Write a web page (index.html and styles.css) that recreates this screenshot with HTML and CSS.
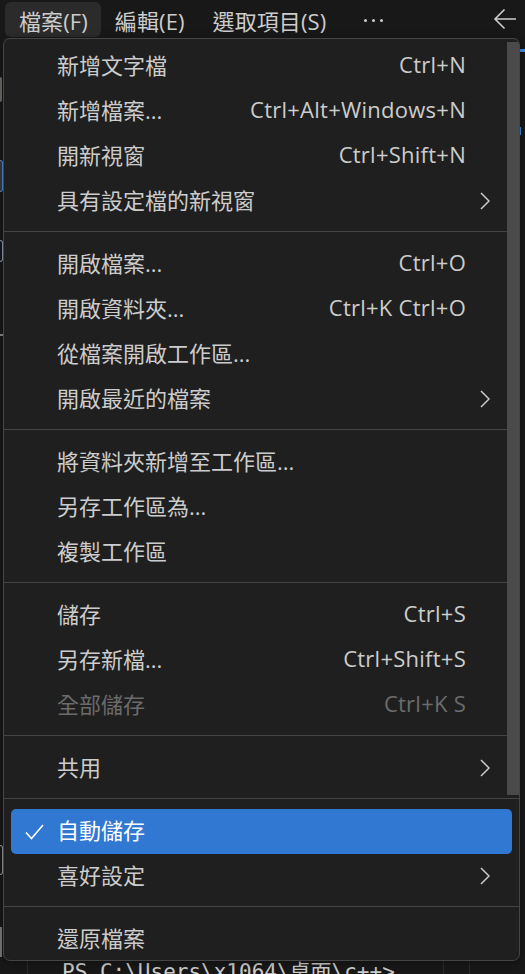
FILE: index.html
```html
<!DOCTYPE html>
<html lang="zh-Hant">
<head>
<meta charset="utf-8">
<title>檔案選單</title>
<link rel="stylesheet" href="styles.css">
</head>
<body>
<div class="app">
  <header class="menubar">
    <div class="mb-item active">檔案(F)</div>
    <div class="mb-item">編輯(E)</div>
    <div class="mb-item">選取項目(S)</div>
    <div class="mb-item more"><span class="dot"></span><span class="dot"></span><span class="dot"></span></div>
    <div class="mb-spacer"></div>
    <div class="back">
      <svg width="24" height="22" viewBox="0 0 24 22"><path d="M23 11H2M11.5 1.5L2 11l9.5 9.5" fill="none" stroke="#cccccc" stroke-width="1.6"/></svg>
    </div>
  </header>
  <main class="workbench">
    <div class="editor">
      <div class="edge">
        <div class="mark m1"></div>
        <div class="mark m2"></div>
        <div class="mark m3"></div>
        <div class="mark m4"></div>
        <div class="mark m5"></div>
        <div class="mark m6"></div>
      </div>
      <div class="editor-body"></div>
      <div class="edge-right">
        <div class="blue-line"></div>
        <div class="blue-plus"></div>
      </div>
    </div>
    <div class="terminal">
      <div class="term-gutter"></div>
      <div class="term-text">PS C:\Users\x1064\桌面\c++&gt;</div>
      <div class="term-col"></div>
      <div class="term-col2"></div>
    </div>
  </main>

  <nav class="menu">
    <div class="scrollbar"></div>

    <div class="item"><span class="check"></span><span class="label">新增文字檔</span><span class="key">Ctrl+N</span><span class="sub"></span></div>
    <div class="item"><span class="check"></span><span class="label">新增檔案...</span><span class="key">Ctrl+Alt+Windows+N</span><span class="sub"></span></div>
    <div class="item"><span class="check"></span><span class="label">開新視窗</span><span class="key">Ctrl+Shift+N</span><span class="sub"></span></div>
    <div class="item"><span class="check"></span><span class="label">具有設定檔的新視窗</span><span class="key"></span><span class="sub"><svg class="chev" width="10" height="18" viewBox="0 0 10 18"><path d="M1 1l8 8-8 8" fill="none" stroke="currentColor" stroke-width="1.5"/></svg></span></div>
    <div class="sep"></div>

    <div class="item"><span class="check"></span><span class="label">開啟檔案...</span><span class="key">Ctrl+O</span><span class="sub"></span></div>
    <div class="item"><span class="check"></span><span class="label">開啟資料夾...</span><span class="key">Ctrl+K Ctrl+O</span><span class="sub"></span></div>
    <div class="item"><span class="check"></span><span class="label">從檔案開啟工作區...</span><span class="key"></span><span class="sub"></span></div>
    <div class="item"><span class="check"></span><span class="label">開啟最近的檔案</span><span class="key"></span><span class="sub"><svg class="chev" width="10" height="18" viewBox="0 0 10 18"><path d="M1 1l8 8-8 8" fill="none" stroke="currentColor" stroke-width="1.5"/></svg></span></div>
    <div class="sep"></div>

    <div class="item"><span class="check"></span><span class="label">將資料夾新增至工作區...</span><span class="key"></span><span class="sub"></span></div>
    <div class="item"><span class="check"></span><span class="label">另存工作區為...</span><span class="key"></span><span class="sub"></span></div>
    <div class="item"><span class="check"></span><span class="label">複製工作區</span><span class="key"></span><span class="sub"></span></div>
    <div class="sep"></div>

    <div class="item"><span class="check"></span><span class="label">儲存</span><span class="key">Ctrl+S</span><span class="sub"></span></div>
    <div class="item"><span class="check"></span><span class="label">另存新檔...</span><span class="key">Ctrl+Shift+S</span><span class="sub"></span></div>
    <div class="item disabled"><span class="check"></span><span class="label">全部儲存</span><span class="key">Ctrl+K S</span><span class="sub"></span></div>
    <div class="sep"></div>

    <div class="item"><span class="check"></span><span class="label">共用</span><span class="key"></span><span class="sub"><svg class="chev" width="10" height="18" viewBox="0 0 10 18"><path d="M1 1l8 8-8 8" fill="none" stroke="currentColor" stroke-width="1.5"/></svg></span></div>
    <div class="sep"></div>

    <div class="item selected"><span class="check"><svg width="19" height="16" viewBox="0 0 19 16"><path d="M1 8.5l5.5 6L18 1" fill="none" stroke="currentColor" stroke-width="1.6"/></svg></span><span class="label">自動儲存</span><span class="key"></span><span class="sub"></span></div>
    <div class="item"><span class="check"></span><span class="label">喜好設定</span><span class="key"></span><span class="sub"><svg class="chev" width="10" height="18" viewBox="0 0 10 18"><path d="M1 1l8 8-8 8" fill="none" stroke="currentColor" stroke-width="1.5"/></svg></span></div>
    <div class="sep"></div>

    <div class="item"><span class="check"></span><span class="label">還原檔案</span><span class="key"></span><span class="sub"></span></div>
  </nav>
</div>
</body>
</html>
```

FILE: styles.css
```css
html, body {
  margin: 0;
  padding: 0;
}

body {
  width: 525px;
  height: 974px;
  overflow: hidden;
  background: #181818;
  color: #cccccc;
  font-family: "Open Sans", "Noto Sans CJK TC", sans-serif;
}

.app {
  position: relative;
  height: 974px;
  display: flex;
  flex-direction: column;
}

/* ---------- menu bar ---------- */
.menubar {
  display: flex;
  align-items: center;
  height: 38px;
  padding-left: 5px;
  box-sizing: border-box;
  flex: none;
}

.mb-item {
  height: 35px;
  padding: 0 14px;
  display: flex;
  align-items: center;
  font-size: 22px;
  border-radius: 6px;
  margin-top: 1px;
  white-space: nowrap;
  letter-spacing: 0.1px;
}

.mb-item.active {
  background: #2b2b2b;
  padding-right: 13px;
}

.mb-item.more {
  padding: 0 14px 0 24px;
  gap: 5px;
}

.dot {
  width: 3px;
  height: 3px;
  border-radius: 50%;
  background: #cccccc;
  margin-top: 1px;
}

.mb-spacer {
  flex: 1;
}

.back {
  width: 32px;
  height: 38px;
  display: flex;
  align-items: center;
}

/* ---------- background workbench ---------- */
.workbench {
  flex: 1;
  display: flex;
  flex-direction: column;
}

.editor {
  flex: 1;
  display: flex;
}

.edge {
  width: 4px;
  display: flex;
  flex-direction: column;
}

.mark {
  flex: none;
}

.m1 {
  margin-top: 39px;
  height: 25px;
  width: 2px;
  background: #6e6a66;
  border-radius: 0 2px 2px 0;
}

.m2 {
  margin-top: 58px;
  height: 30px;
  width: 2px;
  border: 1px solid #4d8fd6;
  border-left: none;
  background: #3a3a3a;
  border-radius: 0 3px 3px 0;
}

.m3 {
  margin-top: 48px;
  height: 20px;
  width: 2px;
  border: 1px solid #8da0b3;
  border-left: none;
  border-radius: 0 10px 10px 0;
}

.m4 {
  margin-top: 60px;
  height: 28px;
  width: 3px;
  background: linear-gradient(#181818 0 12px, #8a8a8a 12px 14px, #181818 14px);
}

.m5 {
  margin-top: 495px;
  height: 28px;
  width: 2px;
  border: 1px solid #9a9a9a;
  border-left: none;
  border-radius: 0 10px 10px 0;
}

.m6 {
  margin-top: 52px;
  height: 30px;
  width: 2px;
  background: #7a7a7a;
}

.editor-body {
  flex: 1;
  background: #1f1f1f;
}

.edge-right {
  width: 6px;
  display: flex;
  flex-direction: column;
}

.blue-line {
  margin-top: 11px;
  height: 3px;
  background: #3c8ee8;
}

.blue-plus {
  margin-top: 75px;
  height: 8px;
  width: 3px;
  border-left: 1px solid #3c8ee8;
  margin-left: 1px;
}

.terminal {
  height: 20px;
  flex: none;
  display: flex;
  background: #181818;
  overflow: hidden;
}

.term-gutter {
  width: 27px;
  border-right: 1px solid #2b2b2b;
  flex: none;
}

.term-text {
  flex: none;
  width: 415px;
  padding-left: 34px;
  box-sizing: border-box;
  font-family: "DejaVu Sans Mono", "Noto Sans CJK TC", monospace;
  font-size: 21px;
  line-height: 20px;
  padding-top: 5px;
  white-space: nowrap;
  overflow: hidden;
  color: #cccccc;
}

.term-col {
  width: 25px;
  border-left: 1px solid #2b2b2b;
  flex: none;
}

.term-col2 {
  flex: 1;
  border-left: 1px solid #2b2b2b;
}

/* ---------- dropdown menu (overlay) ---------- */
.menu {
  position: absolute;
  left: 3px;
  top: 38px;
  width: 517px;
  height: 923px;
  box-sizing: border-box;
  border: 1px solid #454545;
  border-radius: 7px;
  background: #1f1f1f;
  padding: 5px 0 0;
  overflow: hidden;
  box-shadow: 0 2px 8px rgba(0, 0, 0, 0.36);
  font-size: 22px;
}

.scrollbar {
  position: absolute;
  right: 0;
  top: 3px;
  width: 12px;
  height: 753px;
  background: #4a4a4a;
}

.item {
  display: flex;
  align-items: center;
  height: 45px;
  margin: 0 7px;
  border-radius: 5px;
  color: #cccccc;
  white-space: nowrap;
}

.item.selected {
  background: #3178d3;
  color: #ffffff;
}

.item.disabled {
  color: #6b6b6b;
}

.check {
  width: 46px;
  flex: none;
  display: flex;
  align-items: center;
  padding-left: 14px;
  box-sizing: border-box;
}

.label {
  flex: 1;
  padding-bottom: 6px;
}

.key {
  flex: none;
  padding-bottom: 6px;
  letter-spacing: 0.25px;
}

.sub {
  width: 46px;
  flex: none;
  display: flex;
  align-items: center;
  padding-left: 14px;
  padding-bottom: 2px;
  box-sizing: border-box;
}

.chev {
  display: block;
}

.sep {
  height: 1px;
  background: #454545;
  margin: 7px 0 10px;
}
```
